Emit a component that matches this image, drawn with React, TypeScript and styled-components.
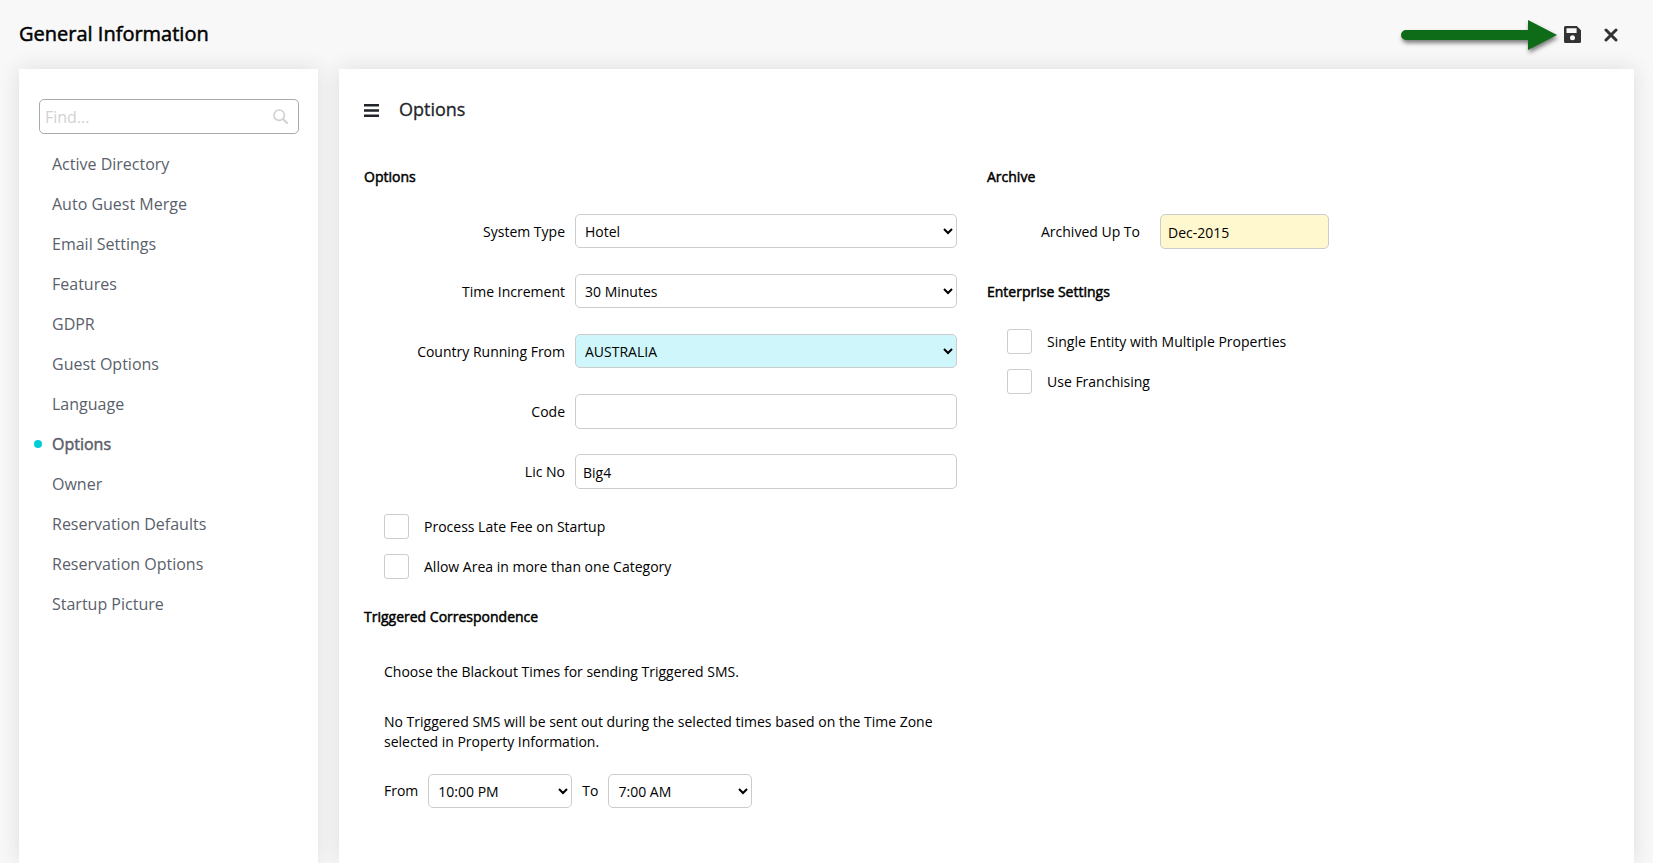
import React from 'react';
import styled, { createGlobalStyle, css } from 'styled-components';

const GlobalStyle = createGlobalStyle`
  *, *::before, *::after { box-sizing: border-box; }
  html, body, #root { height: 100%; }
  body {
    margin: 0;
    background: #f8f8f8;
    color: #212529;
    font: 14px/20px "Open Sans", sans-serif;
  }
  button, input, select { font: inherit; color: inherit; }
  h1, h2, h3, p, ul { margin: 0; padding: 0; }
`;

const emphasis = css`
  font-weight: 400;
  -webkit-text-stroke: 0.5px currentColor;
`;

const Page = styled.div`
  display: flex;
  flex-direction: column;
  min-height: 100%;
  padding: 0 19px;
`;

const Header = styled.header`
  display: flex;
  align-items: center;
  justify-content: space-between;
  height: 69px;
  flex-shrink: 0;
`;

const PageTitle = styled.h1`
  ${emphasis}
  padding-bottom: 2px;
  color: #000;
  font-size: 20px;
  line-height: 28px;
`;

const HeaderActions = styled.div`
  display: flex;
  align-items: center;
  padding-right: 16px;
`;

const ArrowDrawing = styled.svg`
  display: block;
  overflow: visible;
  margin-right: 7px;
  filter: drop-shadow(1px 3px 2px rgba(0, 0, 0, 0.5));
`;

const IconButton = styled.button`
  display: flex;
  padding: 0;
  border: 0;
  background: none;
  color: #333;
  cursor: pointer;
  & + & { margin-left: 23px; }
`;

const Columns = styled.div`
  display: flex;
  flex: 1;
  gap: 21px;
`;

const panel = css`
  background: #fff;
  box-shadow: 0 0 20px rgba(30, 30, 60, 0.12);
`;

const Sidebar = styled.aside`
  ${panel}
  flex: 0 0 299px;
  padding: 30px 19px 30px 20px;
`;

const SearchBox = styled.label`
  display: flex;
  align-items: center;
  height: 35px;
  padding: 0 10px 0 5px;
  border: 1px solid #aaa;
  border-radius: 5px;
  color: #d0d0d0;
`;

const SearchInput = styled.input`
  flex: 1;
  min-width: 0;
  padding: 0;
  border: 0;
  outline: 0;
  background: none;
  color: #212529;
  font-size: 16px;
  &::placeholder { color: #d2d2d2; opacity: 1; }
`;

const NavList = styled.ul`
  padding-top: 10px;
  list-style: none;
`;

const NavLink = styled.a<{ $active?: boolean }>`
  display: flex;
  align-items: center;
  height: 40px;
  padding-left: 13px;
  color: #5a5f6b;
  font-size: 16px;
  text-decoration: none;
  ${(p) => p.$active && css`
    ${emphasis}
    padding-left: 0;
    margin-left: -5px;
    &::before {
      content: "";
      width: 8px;
      height: 8px;
      margin-right: 10px;
      border-radius: 50%;
      background: #00cdd6;
    }
  `}
`;

const Main = styled.main`
  ${panel}
  flex: 1;
  min-width: 0;
  padding: 29px 25px;
`;

const MainHeader = styled.div`
  display: flex;
  align-items: center;
  gap: 20px;
  height: 24px;
  margin-bottom: 44px;
  color: #212529;
  ${IconButton} { color: #212529; }
`;

const MainTitle = styled.h2`
  padding-bottom: 2px;
  font-weight: 400;
  -webkit-text-stroke: 0.3px currentColor;
  font-size: 18px;
  line-height: 24px;
`;

const FormColumns = styled.div`
  display: flex;
  align-items: flex-start;
  gap: 29px;
`;

const FormColumn = styled.div`
  flex: 0 0 594px;
`;

const SectionTitle = styled.h3`
  ${emphasis}
  color: #000;
  font-size: 14px;
  line-height: 22px;
`;

const Fields = styled.div`
  display: flex;
  flex-direction: column;
  padding-top: 26px;
`;

const FieldRow = styled.div`
  display: grid;
  grid-template-columns: 201px 382px;
  align-items: start;
  column-gap: 10px;
  height: 60px;
`;

const ArchiveRow = styled(FieldRow)`
  grid-template-columns: 153px 169px;
  column-gap: 20px;
`;

const FieldLabel = styled.label`
  color: #000;
  line-height: 36px;
  text-align: right;
`;

const control = css`
  width: 100%;
  border: 1px solid #ccc;
  border-radius: 5px;
  color: #000;
`;

const Select = styled.select<{ $highlight?: boolean }>`
  ${control}
  height: 34px;
  padding: 0 5px;
  background: ${(p) => (p.$highlight ? '#cff7fb' : '#fff')};
`;

const TextInput = styled.input<{ $locked?: boolean }>`
  ${control}
  height: 35px;
  padding: 2px 7px 0;
  background: ${(p) => (p.$locked ? '#fff8cf' : '#fff')};
`;

const Checks = styled.div`
  display: flex;
  flex-direction: column;
  gap: 15px;
  padding-left: 20px;
`;

const Enterprise = styled.section`
  padding-top: 7px;
  ${Checks} { padding-top: 26px; }
`;

const CheckLabel = styled.label`
  display: flex;
  align-items: center;
  gap: 15px;
  height: 25px;
  color: #000;
`;

const CheckBox = styled.input`
  appearance: none;
  width: 25px;
  height: 25px;
  margin: 0;
  border: 1px solid #ccc;
  border-radius: 3px;
  background: #fff;
  &:checked { background: #00cdd6; }
`;

const Triggered = styled.section`
  padding-top: 27px;
`;

const TriggeredBody = styled.div`
  display: flex;
  flex-direction: column;
  gap: 30px;
  padding: 34px 20px 0;
  color: #000;
`;

const TimeRange = styled.div`
  display: flex;
  align-items: center;
  gap: 10px;
  margin-top: -8px;
  ${Select} { width: 144px; }
`;

const NAV = [
  'Active Directory', 'Auto Guest Merge', 'Email Settings', 'Features', 'GDPR', 'Guest Options',
  'Language', 'Options', 'Owner', 'Reservation Defaults', 'Reservation Options', 'Startup Picture',
];

function Check({ label }: { label: string }) {
  return <CheckLabel><CheckBox type="checkbox" />{label}</CheckLabel>;
}

export default function App() {
  return (
    <>
      <GlobalStyle />
      <Page>
        <Header>
          <PageTitle>General Information</PageTitle>
          <HeaderActions>
            <ArrowDrawing width="156" height="30" viewBox="0 0 156 30" aria-hidden="true">
              <path d="M5 10H127V0L156 15L127 30V20H5A5 5 0 0 1 5 10Z" fill="#0e6b17" />
            </ArrowDrawing>
            <IconButton type="button" aria-label="Save">
              <svg width="17" height="17" viewBox="0 0 17 17" fill="currentColor" fillRule="evenodd">
                <path d="M1.5 0H12.8L17 4.2V15.5A1.5 1.5 0 0 1 15.5 17H1.5A1.5 1.5 0 0 1 0 15.5V1.5A1.5 1.5 0 0 1 1.5 0ZM2.5 2.3V7H12.6V2.3ZM8.5 9.3A2.5 2.5 0 1 0 8.5 14.3A2.5 2.5 0 1 0 8.5 9.3Z" />
              </svg>
            </IconButton>
            <IconButton type="button" aria-label="Close">
              <svg width="14" height="14" viewBox="0 0 14 14" fill="none" stroke="currentColor" strokeWidth="3" strokeLinecap="round">
                <path d="M2 2L12 12M12 2L2 12" />
              </svg>
            </IconButton>
          </HeaderActions>
        </Header>
        <Columns>
          <Sidebar>
            <SearchBox>
              <SearchInput type="search" placeholder="Find..." aria-label="Find" />
              <svg width="15" height="15" viewBox="0 0 15 15" fill="none" stroke="currentColor" aria-hidden="true">
                <circle cx="6.2" cy="6.2" r="5.2" strokeWidth="1.6" />
                <path d="M10 10L14 14" strokeWidth="2" strokeLinecap="round" />
              </svg>
            </SearchBox>
            <nav>
              <NavList>
                {NAV.map((name) => (
                  <li key={name}><NavLink href="#" $active={name === 'Options'}>{name}</NavLink></li>
                ))}
              </NavList>
            </nav>
          </Sidebar>
          <Main>
            <MainHeader>
              <IconButton type="button" aria-label="Menu">
                <svg width="15" height="13" viewBox="0 0 15 13" fill="currentColor">
                  <path d="M0 0H15V2.4H0ZM0 5.3H15V7.7H0ZM0 10.6H15V13H0Z" />
                </svg>
              </IconButton>
              <MainTitle>Options</MainTitle>
            </MainHeader>
            <FormColumns>
              <FormColumn>
                <SectionTitle>Options</SectionTitle>
                <Fields>
                  <FieldRow>
                    <FieldLabel htmlFor="system">System Type</FieldLabel>
                    <Select id="system"><option>Hotel</option></Select>
                  </FieldRow>
                  <FieldRow>
                    <FieldLabel htmlFor="increment">Time Increment</FieldLabel>
                    <Select id="increment"><option>30 Minutes</option></Select>
                  </FieldRow>
                  <FieldRow>
                    <FieldLabel htmlFor="country">Country Running From</FieldLabel>
                    <Select id="country" $highlight><option>AUSTRALIA</option></Select>
                  </FieldRow>
                  <FieldRow>
                    <FieldLabel htmlFor="code">Code</FieldLabel>
                    <TextInput id="code" />
                  </FieldRow>
                  <FieldRow>
                    <FieldLabel htmlFor="licence">Lic No</FieldLabel>
                    <TextInput id="licence" defaultValue="Big4" />
                  </FieldRow>
                </Fields>
                <Checks>
                  <Check label="Process Late Fee on Startup" />
                  <Check label="Allow Area in more than one Category" />
                </Checks>
                <Triggered>
                  <SectionTitle>Triggered Correspondence</SectionTitle>
                  <TriggeredBody>
                    <p>Choose the Blackout Times for sending Triggered SMS.</p>
                    <p>No Triggered SMS will be sent out during the selected times based on the Time Zone selected in Property Information.</p>
                    <TimeRange>
                      <label htmlFor="from">From</label>
                      <Select id="from"><option>10:00 PM</option></Select>
                      <label htmlFor="to">To</label>
                      <Select id="to"><option>7:00 AM</option></Select>
                    </TimeRange>
                  </TriggeredBody>
                </Triggered>
              </FormColumn>
              <FormColumn>
                <SectionTitle>Archive</SectionTitle>
                <Fields>
                  <ArchiveRow>
                    <FieldLabel htmlFor="archived">Archived Up To</FieldLabel>
                    <TextInput id="archived" defaultValue="Dec-2015" readOnly $locked />
                  </ArchiveRow>
                </Fields>
                <Enterprise>
                  <SectionTitle>Enterprise Settings</SectionTitle>
                  <Checks>
                    <Check label="Single Entity with Multiple Properties" />
                    <Check label="Use Franchising" />
                  </Checks>
                </Enterprise>
              </FormColumn>
            </FormColumns>
          </Main>
        </Columns>
      </Page>
    </>
  );
}
